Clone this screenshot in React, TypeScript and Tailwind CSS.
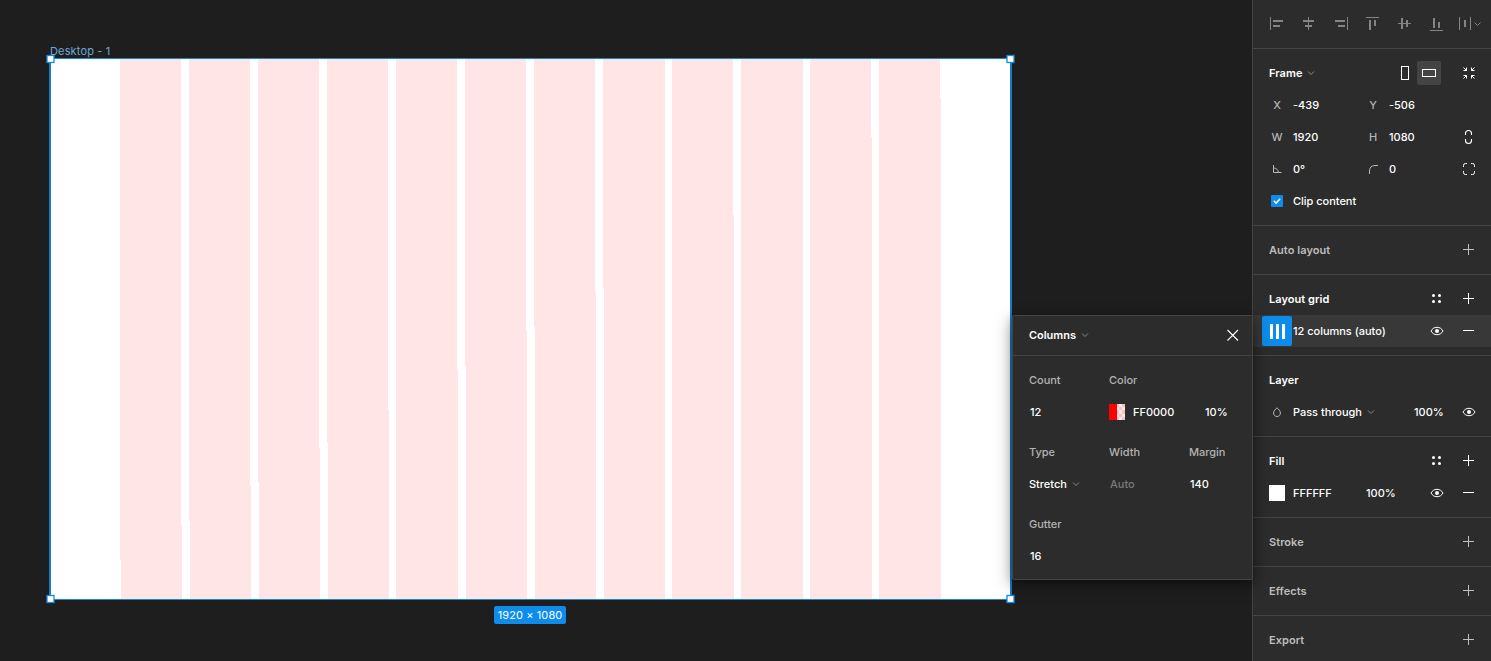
import React, { ReactNode } from "react";

type Rect = [number, number, number, number];

const columns = [
  { l: 120, ly: 560, r: 181, ry: 525 },
  { l: 189, ly: 521, r: 250, ry: 486 },
  { l: 258, ly: 482, r: 319, ry: 448 },
  { l: 327, ly: 443, r: 388, ry: 409 },
  { l: 396, ly: 599, r: 457, ry: 370 },
  { l: 465, ly: 366, r: 526, ry: 331 },
  { l: 534, ly: 327, r: 595, ry: 292 },
  { l: 603, ly: 288, r: 664, ry: 59 },
  { l: 672, ly: 599, r: 733, ry: 215 },
  { l: 741, ly: 599, r: 802, ry: 59 },
  { l: 810, ly: 599, r: 871, ry: 137 },
  { l: 879, ly: 599, r: 940, ry: 98 },
];

function Icon({ rects = [], children, className = "text-white" }: { rects?: Rect[]; children?: ReactNode; className?: string }) {
  return (
    <svg width="32" height="32" viewBox="0 0 32 32" fill="none" className={`shrink-0 ${className}`}>
      {rects.map(([x, y, w, h], i) => (
        <rect key={i} x={x} y={y} width={w} height={h} fill="currentColor" />
      ))}
      {children}
    </svg>
  );
}

const alignIcons: Rect[][] = [
  [[9, 9, 1, 13], [12, 12, 10, 2], [12, 17, 7, 2]],
  [[15, 9, 1, 13], [10, 12, 11, 2], [12, 17, 7, 2]],
  [[22, 9, 1, 13], [10, 12, 10, 2], [13, 17, 7, 2]],
  [[9, 9, 13, 1], [12, 12, 2, 10], [17, 12, 2, 6]],
  [[9, 15, 13, 1], [12, 10, 2, 11], [17, 12, 2, 7]],
  [[9, 22, 13, 1], [12, 10, 2, 10], [17, 14, 2, 6]],
];

function Chevron() {
  return (
    <svg width="8" height="6" viewBox="0 0 8 6" fill="none" stroke="#8a8a8a" className="ml-[5px]">
      <path d="M1 1.5 4 4.5 7 1.5" />
    </svg>
  );
}

const Plus = ({ dim = false }: { dim?: boolean }) => (
  <Icon rects={[[10, 15, 11, 1], [15, 10, 1, 11]]} className={dim ? "text-[#c0c0c0]" : "text-white"} />
);
const Minus = () => <Icon rects={[[10, 15, 11, 1]]} />;
const Dots = () => (
  <Icon>
    {[12.5, 18.5].map((x) => [12.5, 18.5].map((y) => <circle key={`${x}-${y}`} cx={x} cy={y} r="1.5" fill="currentColor" />))}
  </Icon>
);
const Eye = () => (
  <Icon>
    <path d="M10 16C11.3 13.6 13.4 12.3 16 12.3S20.7 13.6 22 16C20.7 18.4 18.6 19.7 16 19.7S11.3 18.4 10 16Z" stroke="currentColor" />
    <circle cx="16" cy="16" r="2" fill="currentColor" />
  </Icon>
);

function Section({ children }: { children: ReactNode }) {
  return <section className="border-b border-[#444444] py-2">{children}</section>;
}

function Row({ children, className = "" }: { children: ReactNode; className?: string }) {
  return <div className={`flex h-8 items-center pr-1.5 ${className}`}>{children}</div>;
}

function Title({ children, dim = false }: { children: ReactNode; dim?: boolean }) {
  return <h2 className={`flex flex-1 items-center pl-4 font-semibold tracking-[0.055px] ${dim ? "text-[#bdbdbd]" : "text-white"}`}>{children}</h2>;
}

function Field({ label, value }: { label: ReactNode; value: string }) {
  return (
    <label className="flex w-24 items-center">
      <span className="flex w-8 shrink-0 justify-center text-[#b3b3b3]">{label}</span>
      <span>{value}</span>
    </label>
  );
}

function Handle({ x, y }: { x: number; y: number }) {
  return <rect x={x - 3.5} y={y - 3.5} width="7" height="7" fill="#fff" stroke="#1589e0" strokeWidth="1.3" />;
}

function Canvas() {
  return (
    <main className="relative min-w-0 flex-1 bg-[#1e1e1e]">
      <svg width="1252" height="661" className="block">
        <rect x="50" y="58" width="961" height="542" fill="#fff" />
        {columns.map((c) => (
          <path key={c.l} fill="#ffe5e5" d={`M${c.l} 59H${c.r}V${c.ry}H${c.r + 1}V599H${c.ly < 599 ? c.l + 1 : c.l}V${c.ly}H${c.l}Z`} />
        ))}
        <rect x="50" y="58.5" width="961" height="541" fill="none" stroke="#1a86d9" />
        <path d="M50 58V600M1011 58V600" stroke="#1a7ac4" strokeWidth="2" />
        <Handle x={50.5} y={59} />
        <Handle x={1010.5} y={59} />
        <Handle x={50.5} y={599} />
        <Handle x={1010.5} y={599} />
      </svg>
      <span className="absolute left-[50px] top-[43px] text-[11px] font-normal leading-4 tracking-[0.15px] text-[#6ba9da]">Desktop - 1</span>
      <span className="absolute left-[494px] top-[606px] flex h-[18px] w-[72px] items-center justify-center whitespace-nowrap rounded-xs bg-[#0d8ceb] text-[11px] font-normal tracking-[0.1px] text-white">
        1920 × 1080
      </span>
    </main>
  );
}

function GridPopover() {
  return (
    <div className="absolute left-[1012px] top-[315px] h-[265px] w-[241px] rounded-xs border border-[#444444] bg-[#2c2c2c] text-white shadow-[0_5px_17px_rgba(0,0,0,0.4),0_2px_7px_rgba(0,0,0,0.25)]">
      <div className="flex h-10 items-center border-b border-[#444444] pl-4 pr-[3px]">
        <h2 className="flex flex-1 items-center pb-0.5 font-semibold">
          Columns
          <Chevron />
        </h2>
        <Icon>
          <path d="M10.5 10 21 20.5M21 10 10.5 20.5" stroke="currentColor" strokeWidth="1.1" />
        </Icon>
      </div>
      <div className="flex flex-col gap-2 pl-4 pt-2">
        <div>
          <div className="flex h-8 items-center text-[#b3b3b3]">
            <span className="w-20">Count</span>
            <span className="w-20">Color</span>
          </div>
          <div className="flex h-8 items-center">
            <span className="w-20 pl-px">12</span>
            <span className="flex w-24 items-center gap-2">
              <svg width="16" height="16" shapeRendering="crispEdges">
                <rect width="16" height="16" fill="#ffe5e5" />
                <path fill="#e6c8c8" d="M8 0h2v3h-2zM13 0h3v3h-3zM10 3h3v3h-3zM8 6h2v4h-2zM13 6h3v4h-3zM10 10h3v3h-3zM8 13h2v3h-2zM13 13h3v3h-3z" />
                <rect width="8" height="16" fill="#ff0000" />
              </svg>
              FF0000
            </span>
            <span>10%</span>
          </div>
        </div>
        <div>
          <div className="flex h-8 items-center text-[#b3b3b3]">
            <span className="w-20">Type</span>
            <span className="w-20">Width</span>
            <span>Margin</span>
          </div>
          <div className="flex h-8 items-center">
            <span className="flex w-20 items-center">
              Stretch
              <Chevron />
            </span>
            <span className="w-20 pl-px text-[#7a7a7a]">Auto</span>
            <span className="pl-px">140</span>
          </div>
        </div>
        <div>
          <div className="flex h-8 items-center text-[#b3b3b3]">Gutter</div>
          <div className="flex h-8 items-center pl-px">16</div>
        </div>
      </div>
    </div>
  );
}

function Inspector() {
  return (
    <aside className="w-[239px] shrink-0 overflow-hidden border-l border-[#444444] bg-[#2c2c2c] text-white">
      <div className="flex h-[49px] items-center border-b border-[#444444] pl-2">
        {alignIcons.map((r, i) => (
          <Icon key={i} rects={r} className="text-[#848484]" />
        ))}
        <Icon rects={[[6, 9, 1, 13], [17, 9, 1, 13], [11, 12, 2, 7]]} className="-mr-2 text-[#848484]">
          <path d="M21.5 14.5 24.5 17.5 27.5 14.5" stroke="currentColor" />
        </Icon>
      </div>

      <Section>
        <Row>
          <Title>
            Frame
            <Chevron />
          </Title>
          <span className="flex w-6 justify-center">
            <svg width="8" height="14" fill="none">
              <rect x=".5" y=".5" width="7" height="13" stroke="#fff" />
            </svg>
          </span>
          <span className="mr-3 flex size-6 items-center justify-center rounded-xs bg-[#444444]">
            <svg width="14" height="8" fill="none">
              <rect x=".5" y=".5" width="13" height="7" stroke="#fff" />
            </svg>
          </span>
          <Icon>
            <path d="M10.5 10.5 13.5 13.5M10.5 13.5H13.5V10.5M21.5 10.5 18.5 13.5M21.5 13.5H18.5V10.5M10.5 21.5 13.5 18.5M10.5 18.5H13.5V21.5M21.5 21.5 18.5 18.5M21.5 18.5H18.5V21.5" stroke="currentColor" />
          </Icon>
        </Row>
        <Row className="pl-2">
          <Field label="X" value="-439" />
          <Field label="Y" value="-506" />
        </Row>
        <Row className="pl-2">
          <Field label="W" value="1920" />
          <Field label="H" value="1080" />
          <Icon>
            <path d="M12.5 14V12.5C12.5 10.5 13.7 9.5 15.5 9.5S18.5 10.5 18.5 12.5V14M12.5 18V19.5C12.5 21.5 13.7 22.5 15.5 22.5S18.5 21.5 18.5 19.5V18" stroke="currentColor" strokeWidth="1.1" />
          </Icon>
        </Row>
        <Row className="pl-2">
          <Field
            label={
              <Icon className="text-[#b8b8b8]">
                <path d="M12.5 12V19.5H20.5M12.5 15C15.4 15 17.3 16.9 17.3 19.5" stroke="currentColor" />
              </Icon>
            }
            value="0°"
          />
          <Field
            label={
              <Icon className="text-[#b8b8b8]">
                <path d="M12.5 21V18C12.5 14.5 14.5 12.5 18 12.5H21" stroke="currentColor" />
              </Icon>
            }
            value="0"
          />
          <Icon>
            <path d="M10.5 14V12.5Q10.5 10.5 12.5 10.5H14M18 10.5H19.5Q21.5 10.5 21.5 12.5V14M21.5 18V19.5Q21.5 21.5 19.5 21.5H18M14 21.5H12.5Q10.5 21.5 10.5 19.5V18" stroke="currentColor" />
          </Icon>
        </Row>
        <Row className="pl-[18px]">
          <span className="mr-2.5 flex size-3 items-center justify-center rounded-[1px] bg-[#0d8ceb]">
            <svg width="12" height="12" fill="none">
              <path d="M2.8 5.8 5 8.1 9.2 3.8" stroke="#fff" strokeWidth="1.5" />
            </svg>
          </span>
          Clip content
        </Row>
      </Section>

      <Section>
        <Row>
          <Title dim>Auto layout</Title>
          <Plus dim />
        </Row>
      </Section>

      <Section>
        <Row>
          <Title>Layout grid</Title>
          <Dots />
          <Plus />
        </Row>
        <Row className="bg-[#383838] pl-[9px]">
          <span className="mr-px flex size-[30px] items-center justify-center gap-[3px] rounded-xs bg-[#0d8ceb]">
            <i className="h-[15px] w-[3px] bg-white" />
            <i className="h-[15px] w-[3px] bg-white" />
            <i className="h-[15px] w-[3px] bg-white" />
          </span>
          <span className="flex-1">12 columns (auto)</span>
          <Eye />
          <Minus />
        </Row>
      </Section>

      <Section>
        <Row>
          <Title>Layer</Title>
        </Row>
        <Row className="pl-2">
          <Icon className="text-[#b8b8b8]">
            <path d="M16 11.8C14.5 13.3 12.6 14.8 12.6 17C12.6 19.1 14.1 20.5 16 20.5S19.4 19.1 19.4 17C19.4 14.8 17.5 13.3 16 11.8Z" stroke="currentColor" />
          </Icon>
          <span className="flex w-[121px] items-center">
            Pass through
            <Chevron />
          </span>
          <span className="flex-1">100%</span>
          <Eye />
        </Row>
      </Section>

      <Section>
        <Row>
          <Title>Fill</Title>
          <Dots />
          <Plus />
        </Row>
        <Row className="pl-4">
          <span className="mr-2 size-4 bg-white" />
          <span className="w-[73px]">FFFFFF</span>
          <span className="flex-1">100%</span>
          <Eye />
          <Minus />
        </Row>
      </Section>

      {["Stroke", "Effects", "Export"].map((t) => (
        <Section key={t}>
          <Row>
            <Title dim>{t}</Title>
            <Plus dim />
          </Row>
        </Section>
      ))}
    </aside>
  );
}

export default function App() {
  return (
    <div className="relative flex h-[661px] w-[1491px] overflow-hidden bg-[#1e1e1e] font-['Inter',sans-serif] text-[11px] font-medium leading-4 tracking-[-0.02px]">
      <Canvas />
      <Inspector />
      <GridPopover />
    </div>
  );
}
